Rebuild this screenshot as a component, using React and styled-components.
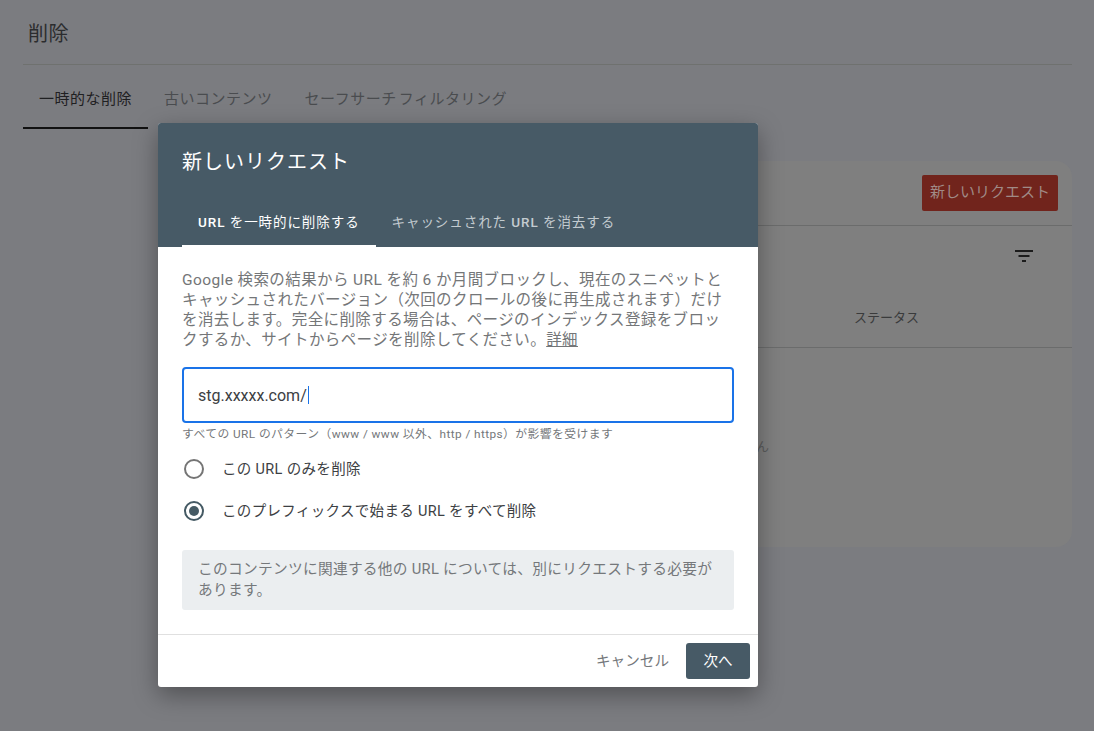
import React from "react";
import styled, { createGlobalStyle } from "styled-components";

const Global = createGlobalStyle`
  html, body { margin: 0; padding: 0; height: 100%; background: #7b7c80; }
  body { font-family: Roboto, "Noto Sans CJK JP", sans-serif; overflow: hidden; }
  #root { height: 100%; }
`;

const Page = styled.div`
  position: relative;
  width: 1094px;
  height: 731px;
  padding: 0 22px 0 23px;
  box-sizing: border-box;
  background: #7b7c80;
`;
const PageTitle = styled.h1`
  margin: 0;
  height: 64px;
  padding-left: 5px;
  display: flex;
  align-items: center;
  font-size: 20px;
  letter-spacing: 0.5px;
  font-weight: 400;
  color: #2b2c2e;
  border-bottom: 1px solid #6f716f;
`;
const PageTabs = styled.div`
  display: flex;
  height: 64px;
`;
const PageTab = styled.div`
  box-sizing: border-box;
  height: 64px;
  padding: 3px 16px 0;
  display: flex;
  align-items: center;
  font-size: 15px;
  letter-spacing: 0.5px;
  word-spacing: -2px;
  white-space: nowrap;
  color: ${(p) => (p.$active ? "#1f2022" : "#4a4c4f")};
  border-bottom: 2px solid ${(p) => (p.$active ? "#111" : "transparent")};
`;
const Card = styled.section`
  margin: 32px 0 0 135px;
  width: 914px;
  height: 386px;
  box-sizing: border-box;
  background: #7f7f7f;
  border-radius: 16px;
`;
const CardHead = styled.div`
  height: 65px;
  padding: 14px 14px 0 0;
  box-sizing: border-box;
  display: flex;
  justify-content: flex-end;
  border-bottom: 1px solid #6b6c6c;
`;
const RedButton = styled.div`
  width: 136px;
  height: 36px;
  padding-bottom: 6px;
  box-sizing: border-box;
  background: #71241c;
  border-radius: 2px;
  color: #a08a86;
  font-size: 15px;
  display: flex;
  align-items: center;
  justify-content: center;
`;
const FilterRow = styled.div`
  height: 60px;
  padding-right: 36px;
  display: flex;
  justify-content: flex-end;
  align-items: center;
`;
const ColumnRow = styled.div`
  height: 62px;
  padding: 0 153px 0 0;
  box-sizing: border-box;
  display: flex;
  justify-content: flex-end;
  align-items: center;
  font-size: 13px;
  color: #3a3b3c;
  border-bottom: 1px solid #6b6c6c;
`;
const EmptyText = styled.div`
  padding: 88px 303px 0 0;
  text-align: right;
  font-size: 13px;
  color: #5b5c5c;
`;

const Dialog = styled.div`
  position: absolute;
  left: 158px;
  top: 123px;
  width: 600px;
  height: 564px;
  background: #fff;
  border-radius: 3px;
  box-shadow: 0 8px 24px rgba(0, 0, 0, 0.35);
  display: flex;
  flex-direction: column;
  overflow: hidden;
`;
const DialogHead = styled.header`
  height: 124px;
  box-sizing: border-box;
  background: #475a66;
  padding: 0 24px;
  display: flex;
  flex-direction: column;
  flex: none;
`;
const DialogTitle = styled.h2`
  margin: 0;
  height: 78px;
  padding-bottom: 3px;
  box-sizing: border-box;
  display: flex;
  align-items: center;
  font-size: 20px;
  letter-spacing: 1px;
  font-weight: 400;
  color: #fff;
`;
const DialogTabs = styled.div`
  display: flex;
  height: 46px;
`;
const DialogTab = styled.div`
  box-sizing: border-box;
  height: 46px;
  padding: 0 16px 5px;
  display: flex;
  align-items: center;
  font-size: 13.5px;
  letter-spacing: 0.93px;
  white-space: nowrap;
  color: ${(p) => (p.$active ? "#fff" : "#c3cbd0")};
  border-bottom: 2px solid ${(p) => (p.$active ? "#fff" : "transparent")};
  b { font-weight: 500; }
`;
const DialogBody = styled.div`
  flex: 1;
  padding: 23px 24px 0;
  display: flex;
  flex-direction: column;
`;
const Intro = styled.p`
  margin: 0;
  font-size: 15.5px;
  letter-spacing: 0.4px;
  line-height: 20px;
  color: #747678;
  a { color: #747678; text-decoration: underline; }
`;
const UrlField = styled.div`
  margin-top: 17px;
  height: 56px;
  box-sizing: border-box;
  border: 2px solid #1a73e8;
  border-radius: 4px;
  padding: 0 14px;
  display: flex;
  align-items: center;
  font-size: 16px;
  color: #3c4043;
`;
const Caret = styled.span`
  display: inline-block;
  width: 1px;
  height: 18px;
  margin-left: 1px;
  background: #1a73e8;
`;
const Hint = styled.div`
  margin-top: 3px;
  height: 16px;
  font-size: 11.8px;
  letter-spacing: 0.43px;
  line-height: 16px;
  color: #74777a;
`;
const RadioRow = styled.label`
  display: flex;
  align-items: center;
  height: 42px;
  padding-left: 2px;
  font-size: 14.5px;
  letter-spacing: 0.33px;
  color: #3c4043;
`;
const RadioText = styled.span`
  padding-bottom: 3px;
`;
const RadioGroup = styled.div`
  margin-top: 6px;
  display: flex;
  flex-direction: column;
`;
const RadioMark = styled.span`
  width: 20px;
  height: 20px;
  box-sizing: border-box;
  margin-right: 18px;
  border-radius: 50%;
  border: 2px solid ${(p) => (p.$on ? "#455a64" : "#757575")};
  display: flex;
  align-items: center;
  justify-content: center;
  &::after {
    content: "";
    width: 10px;
    height: 10px;
    border-radius: 50%;
    background: ${(p) => (p.$on ? "#455a64" : "transparent")};
  }
`;
const Notice = styled.div`
  margin-top: 18px;
  height: 60px;
  box-sizing: border-box;
  padding: 9px 16px;
  background: #ebeef0;
  border-radius: 3px;
  font-size: 14.7px;
  letter-spacing: 0.3px;
  line-height: 21px;
  color: #75787b;
`;
const DialogFoot = styled.footer`
  flex: none;
  height: 53px;
  box-sizing: border-box;
  border-top: 1px solid #e0e0e0;
  padding: 8px 8px 0 0;
  display: flex;
  justify-content: flex-end;
  align-items: flex-start;
`;
const TextButton = styled.div`
  height: 36px;
  padding-bottom: 4px;
  box-sizing: border-box;
  display: flex;
  align-items: center;
  margin-right: 17px;
  font-size: 14.6px;
  color: #75787b;
`;
const PrimaryButton = styled.div`
  width: 64px;
  height: 36px;
  padding-bottom: 4px;
  box-sizing: border-box;
  background: #475a66;
  border-radius: 3px;
  display: flex;
  align-items: center;
  justify-content: center;
  font-size: 14.6px;
  color: #fff;
`;

const FilterIcon = () => (
  <svg width="24" height="24" viewBox="0 0 24 24" fill="#1c1c1c">
    <path d="M3 6h18v2H3zM6.5 11h11v2h-11zM10 16h4v2h-4z" />
  </svg>
);

export default function App() {
  return (
    <Page>
      <Global />
      <PageTitle>削除</PageTitle>
      <PageTabs>
        <PageTab $active>一時的な削除</PageTab>
        <PageTab>古いコンテンツ</PageTab>
        <PageTab>セーフサーチ フィルタリング</PageTab>
      </PageTabs>
      <Card>
        <CardHead>
          <RedButton>新しいリクエスト</RedButton>
        </CardHead>
        <FilterRow>
          <FilterIcon />
        </FilterRow>
        <ColumnRow>ステータス</ColumnRow>
        <EmptyText>データはありません</EmptyText>
      </Card>
      <Dialog>
        <DialogHead>
          <DialogTitle>新しいリクエスト</DialogTitle>
          <DialogTabs>
            <DialogTab $active><span><b>URL</b> を一時的に削除する</span></DialogTab>
            <DialogTab><span>キャッシュされた <b>URL</b> を消去する</span></DialogTab>
          </DialogTabs>
        </DialogHead>
        <DialogBody>
          <Intro>
            Google 検索の結果から URL を約 6 か月間ブロックし、現在のスニペットとキャッシュされたバージョン（次回のクロールの後に再生成されます）だけを消去します。完全に削除する場合は、ページのインデックス登録をブロックするか、サイトからページを削除してください。<a href="#">詳細</a>
          </Intro>
          <UrlField>stg.xxxxx.com/<Caret /></UrlField>
          <Hint>すべての URL のパターン（www / www 以外、http / https）が影響を受けます</Hint>
          <RadioGroup>
            <RadioRow><RadioMark /><RadioText>この URL のみを削除</RadioText></RadioRow>
            <RadioRow><RadioMark $on /><RadioText>このプレフィックスで始まる URL をすべて削除</RadioText></RadioRow>
          </RadioGroup>
          <Notice>このコンテンツに関連する他の URL については、別にリクエストする必要があります。</Notice>
        </DialogBody>
        <DialogFoot>
          <TextButton>キャンセル</TextButton>
          <PrimaryButton>次へ</PrimaryButton>
        </DialogFoot>
      </Dialog>
    </Page>
  );
}
